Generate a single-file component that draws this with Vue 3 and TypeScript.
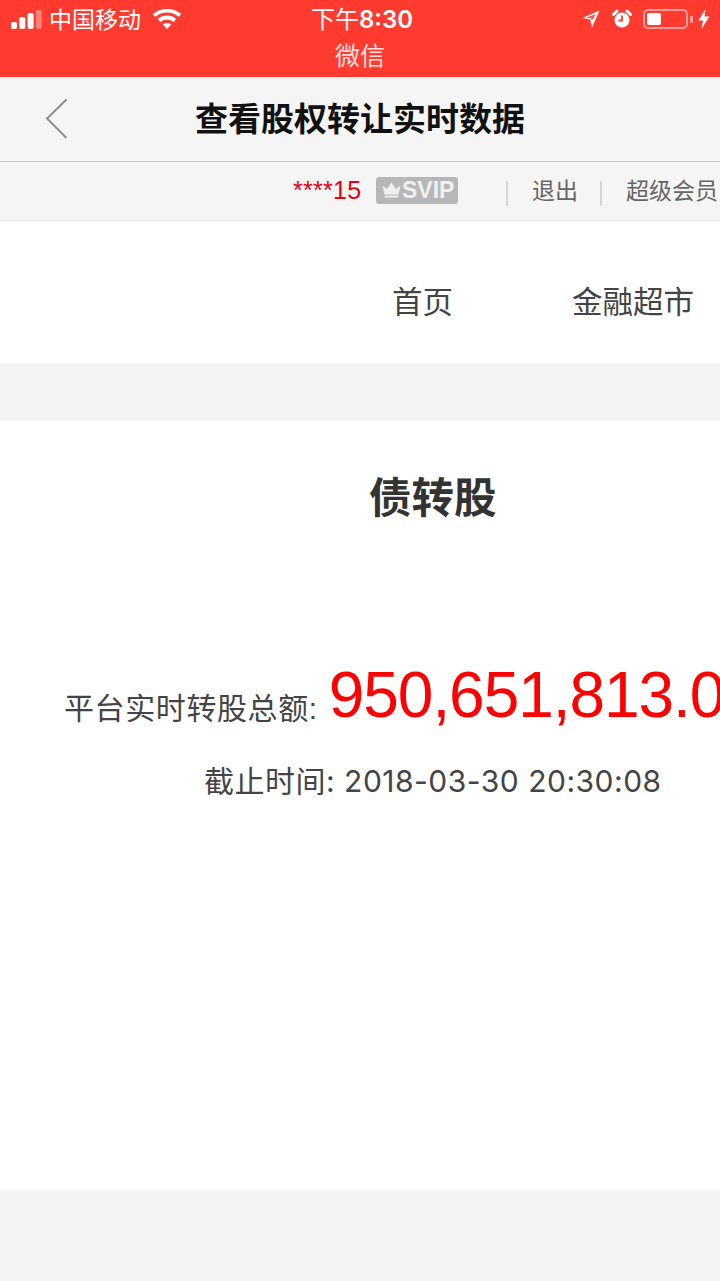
<script setup lang="ts">
const bars = [7, 12, 16, 19]
</script>

<template>
  <div class="page">
    <header class="status">
      <div class="status__row">
        <div class="status__left">
          <svg class="signal" width="32" height="20" viewBox="0 0 32 20">
            <rect
              v-for="(h, i) in bars"
              :key="i"
              :x="i * 8.300"
              :y="20 - h"
              width="6"
              :height="h"
              rx="2"
              :fill="i === 3 ? 'rgba(255,255,255,0.35)' : '#fff'"
            />
          </svg>
          <span class="carrier">中国移动</span>
          <svg class="wifi" width="28" height="20" viewBox="0 0 28 20">
            <path d="M1 6.500C8.500 0 19.500 0 27 6.500" fill="none" stroke="#fff" stroke-width="3.800" />
            <path d="M6 11.500C10.500 7.500 17.500 7.500 22 11.500" fill="none" stroke="#fff" stroke-width="3.800" />
            <path d="M9.800 15.500C12 13.500 16 13.500 18.200 15.500L14 20Z" fill="#fff" />
          </svg>
        </div>
        <span class="clock">下午<b class="clock__time">8:30</b></span>
        <div class="status__right">
          <svg width="20" height="20" viewBox="0 0 20 20">
            <path d="M18.500 1.500 1.500 9l7.700 1.600L11 18.500ZM15 5 8.500 9.300 5.500 8.600ZM15 5l-4.300 6.500-.8-2.700Z" fill="#fff" fill-rule="evenodd" />
          </svg>
          <svg class="alarm" width="20" height="20" viewBox="0 0 20 20">
            <circle cx="10" cy="11" r="7.500" fill="#fff" />
            <path d="M10 6.500V11.500H6.500" fill="none" stroke="#ff3b30" stroke-width="1.800" />
            <path d="M1.500 5.500 5 2M18.500 5.500 15 2" stroke="#fff" stroke-width="3" stroke-linecap="round" />
          </svg>
          <div class="battery">
            <div class="battery__body"><div class="battery__level"></div></div>
            <div class="battery__cap"></div>
          </div>
          <svg width="12" height="20" viewBox="0 0 12 20">
            <path d="M7.500 0 0.500 11.500H5L3.500 20 11.500 7.500H6.500Z" fill="#fff" />
          </svg>
        </div>
      </div>
      <div class="status__app">微信</div>
    </header>

    <nav class="titlebar">
      <svg class="back" width="24" height="42" viewBox="0 0 24 42">
        <path d="M21.500 1.500 2 20.500 21.500 40" fill="none" stroke="#8e8e8e" stroke-width="2" />
      </svg>
      <h1 class="titlebar__text">查看股权转让实时数据</h1>
    </nav>

    <div class="userbar">
      <span class="userbar__name">****15</span>
      <span class="svip">
        <svg width="19" height="16" viewBox="0 0 19 16">
          <path d="M0.500 3.500 5 7 9.500 0.500 14 7 18.500 3.500 16.500 12.500h-14ZM2.800 13.500h13.400V15.500H2.800Z" fill="#f0f0f0" />
        </svg>
        SVIP
      </span>
      <i class="userbar__sep userbar__sep--first"></i>
      <span class="userbar__link">退出</span>
      <i class="userbar__sep userbar__sep--second"></i>
      <span class="userbar__link">超级会员</span>
    </div>

    <div class="menu">
      <span class="menu__item">首页</span>
      <span class="menu__item menu__item--market">金融超市</span>
    </div>

    <main class="panel">
      <h2 class="panel__title">债转股</h2>
      <div class="total">
        <span class="total__label">平台实时转股总额:</span>
        <span class="total__value">950,651,813.00</span>
      </div>
      <p class="deadline">截止时间: 2018-03-30 20:30:08</p>
    </main>

    <div class="footer"></div>
  </div>
</template>

<style scoped>
.page {
  width: 720px;
  height: 1281px;
  overflow: hidden;
  display: flex;
  flex-direction: column;
  background: #f4f4f4;
  font-family: "Liberation Sans", "Noto Sans CJK SC", sans-serif;
}

.status {
  height: 77px;
  flex-shrink: 0;
  background: #ff3b30;
  color: #fff;
}

.status__row {
  height: 40px;
  position: relative;
  display: flex;
  align-items: center;
  justify-content: space-between;
  padding: 0 10px 2px 11px;
  box-sizing: border-box;
}

.status__left,
.status__right {
  display: flex;
  align-items: center;
}

.carrier {
  margin-left: 6px;
  margin-bottom: 3px;
  font-size: 23px;
}

.wifi {
  margin-left: 12px;
}

.clock {
  position: absolute;
  top: 5px;
  left: 0;
  right: 0;
  padding-left: 4px;
  text-align: center;
  font-size: 24px;
  line-height: 30px;
}

.clock__time {
  font-family: Inter, "Liberation Sans", sans-serif;
  font-weight: 600;
}

.alarm {
  margin-left: 11px;
}

.battery {
  display: flex;
  align-items: center;
  margin-left: 11px;
  margin-right: 5px;
}

.battery__body {
  width: 45px;
  height: 20px;
  box-sizing: border-box;
  border: 2px solid rgba(255, 255, 255, 0.5);
  border-radius: 5px;
  padding: 2px;
}

.battery__level {
  width: 14px;
  height: 100%;
  background: #fff;
  border-radius: 2px;
}

.battery__cap {
  width: 3px;
  height: 7px;
  margin-left: 2px;
  background: rgba(255, 255, 255, 0.5);
}

.status__app {
  text-align: center;
  font-size: 25px;
  line-height: 30px;
  margin-top: 1px;
  opacity: 0.85;
}

.titlebar {
  height: 85px;
  flex-shrink: 0;
  box-sizing: border-box;
  position: relative;
  display: flex;
  align-items: center;
  justify-content: center;
  padding-bottom: 4px;
  background: #f5f5f5;
  border-bottom: 1px solid #c8c8c8;
}

.back {
  position: absolute;
  left: 45px;
  top: 21px;
}

.titlebar__text {
  margin: 0;
  font-size: 33px;
  font-weight: 700;
  color: #111;
}

.userbar {
  height: 59px;
  flex-shrink: 0;
  box-sizing: border-box;
  display: flex;
  align-items: center;
  padding: 0 0 2px 293px;
  white-space: nowrap;
  background: #f5f5f5;
  border-bottom: 1px solid #e6e6e6;
}

.userbar__name {
  width: 83px;
  font-size: 25px;
  letter-spacing: 0.300px;
  color: #e60012;
}

.svip {
  width: 82px;
  height: 27px;
  box-sizing: border-box;
  padding-left: 6px;
  display: flex;
  align-items: center;
  gap: 1px;
  border-radius: 3px;
  background: #b7b7b7;
  color: #f0f0f0;
  font-size: 23px;
  font-weight: 700;
}

.userbar__sep {
  width: 2px;
  height: 25px;
  margin: 6px 24px 0;
  background: #d5d5d5;
}

.userbar__sep--first {
  margin-left: 48px;
}

.userbar__sep--second {
  margin-left: 22px;
}

.userbar__link {
  margin-bottom: 2px;
  font-size: 23px;
  color: #666;
}

.menu {
  height: 142px;
  flex-shrink: 0;
  display: flex;
  align-items: center;
  padding: 16px 0 0 392px;
  box-sizing: border-box;
  background: #fff;
  white-space: nowrap;
}

.menu__item {
  font-size: 30.500px;
  color: #444;
}

.menu__item--market {
  margin-left: 119px;
}

.panel {
  margin-top: 58px;
  height: 768px;
  flex-shrink: 0;
  background: #fff;
  overflow: hidden;
  white-space: nowrap;
}

.panel__title {
  margin: 46px 0 0 369px;
  font-size: 42.500px;
  line-height: 64px;
  font-weight: 700;
  color: #333;
}

.total {
  display: flex;
  align-items: flex-end;
  margin: 126px 0 0 64px;
}

.total__label {
  padding-bottom: 4px;
  font-size: 30px;
  line-height: 40px;
  letter-spacing: 0.600px;
  color: #444;
}

.total__value {
  margin-left: 11px;
  font-size: 64px;
  letter-spacing: -1.050px;
  line-height: 76px;
  color: #f00;
}

.deadline {
  margin: 28px 0 0 204px;
  font-family: Inter, "Noto Sans CJK SC", sans-serif;
  font-size: 30px;
  letter-spacing: 0.500px;
  line-height: 40px;
  color: #444;
}

.footer {
  flex: 1;
  background: #f4f4f4;
}
</style>
